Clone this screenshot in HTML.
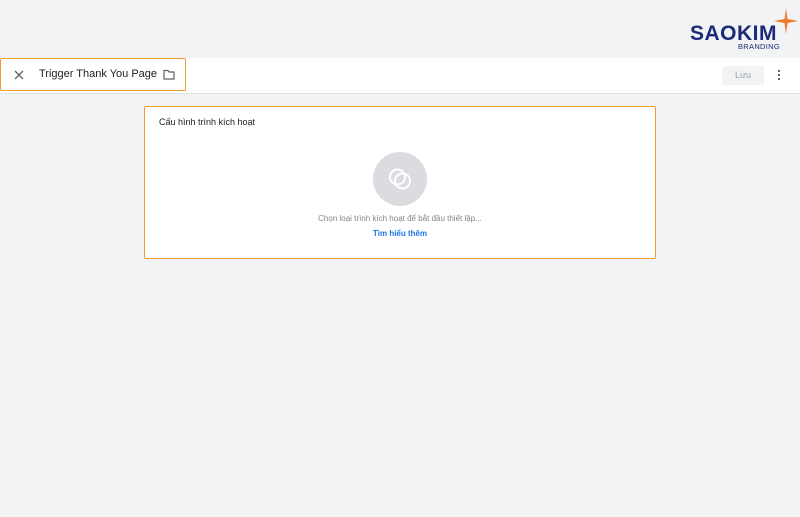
<!DOCTYPE html>
<html><head><meta charset="utf-8"><style>
body{margin:0;width:800px;height:517px;background:#f1f3f4;font-family:"Liberation Sans",Arial,sans-serif;position:relative;overflow:hidden}
.bar{position:absolute;left:0;top:58px;width:800px;height:35px;background:#fff;border-bottom:1px solid #e0e0e0}
.title{position:absolute;left:0;top:58px;width:184px;height:31px;border:1px solid #f29a33;border-radius:2px;background:#fff}
.card{position:absolute;left:144px;top:106px;width:510px;height:151px;border:1px solid #f29a33;border-radius:2px;background:#fff}
</style></head><body>
<div style="position:absolute;left:690px;top:22px;font-weight:bold;font-size:21px;color:#1d2a7a;letter-spacing:0.5px">SAOKIM</div>
<div style="position:absolute;left:738px;top:42px;font-size:7.5px;color:#1d2a7a;letter-spacing:0.3px">BRANDING</div>
<svg style="position:absolute;left:774px;top:8px" width="24" height="26" viewBox="0 0 24 26"><path d="M12 0 L13.5 11 L24 13 L13.5 15 L12 26 L10.5 15 L0 13 L10.5 11Z" fill="#f07a2a"/></svg>
<div class="bar"></div>
<div class="title">
<svg style="position:absolute;left:13px;top:11px" width="10" height="10" viewBox="0 0 10 10"><path d="M1 1L9 9M9 1L1 9" stroke="#5f6368" stroke-width="1.3"/></svg>
<span style="position:absolute;left:38px;top:9px;font-size:11px;color:#202124">Trigger Thank You Page</span>
<svg style="position:absolute;left:162px;top:10px" width="12" height="11" viewBox="0 0 12 11"><path d="M1 1.5h4l1 1.5h5v7H1z" fill="none" stroke="#5f6368" stroke-width="1.2"/></svg>
</div>
<div style="position:absolute;left:722px;top:66px;width:42px;height:19px;background:#f1f3f4;border-radius:2px;font-size:9px;color:#9aa0a6;text-align:center;line-height:19px">Lưu</div>
<div style="position:absolute;left:778px;top:70px;width:2px;height:2px;background:#5f6368;box-shadow:0 4px #5f6368,0 8px #5f6368"></div>
<div class="card">
<div style="position:absolute;left:14px;top:10px;font-size:9px;color:#202124">Cấu hình trình kích hoạt</div>
<div style="position:absolute;left:228px;top:45px;width:54px;height:54px;border-radius:50%;background:#dadce0"></div>
<svg style="position:absolute;left:241px;top:58px" width="28" height="28" viewBox="0 0 28 28"><circle cx="11.5" cy="12" r="7.5" fill="none" stroke="#fff" stroke-width="2"/><circle cx="16.5" cy="16" r="7.5" fill="none" stroke="#fff" stroke-width="2"/></svg>
<div style="position:absolute;left:0;width:510px;top:107px;text-align:center;font-size:8px;color:#80868b">Chọn loại trình kích hoạt để bắt đầu thiết lập...</div>
<div style="position:absolute;left:0;width:510px;top:122px;text-align:center;font-size:8px;color:#1a73e8;font-weight:bold">Tìm hiểu thêm</div>
</div>
</body></html>
